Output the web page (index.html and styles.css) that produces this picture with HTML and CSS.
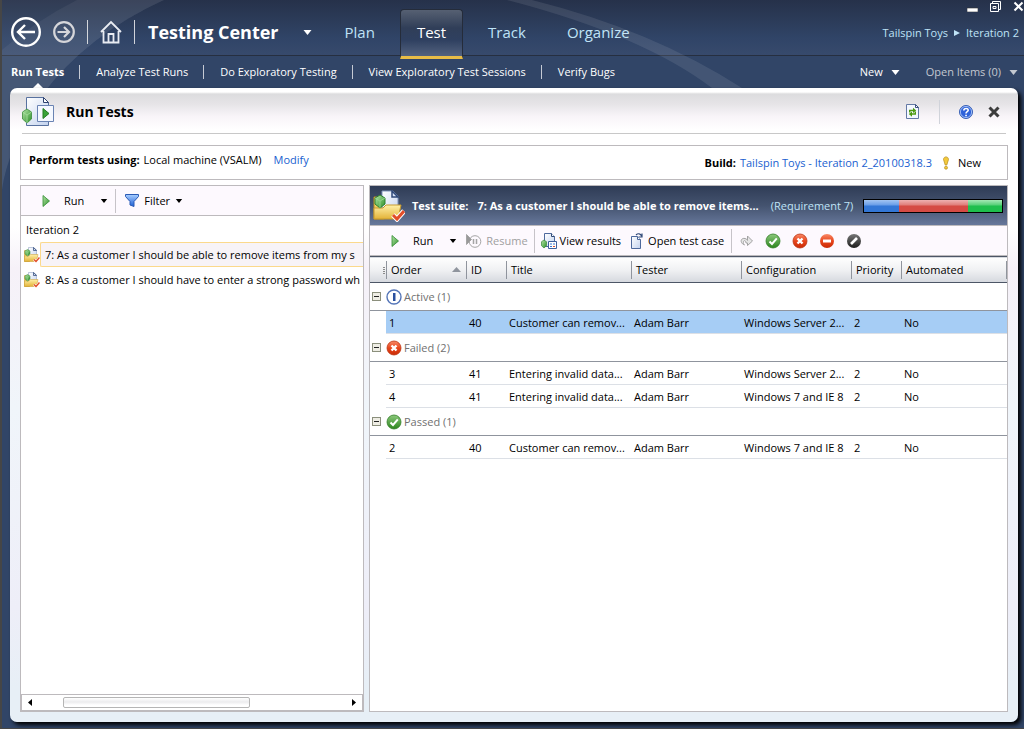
FILE: index.html
```
<!DOCTYPE html>
<html lang="en">

<head>
  <meta charset="UTF-8">
  <meta name="viewport" content="width=device-width, initial-scale=1.0">
  <title>Testing Center</title>
  <link rel="stylesheet" href="styles.css">
</head>

<body>
  <!-- shared icons -->
  <svg class="defs" width="0" height="0" aria-hidden="true">
    <defs>
      <linearGradient id="g-green" x1="0" y1="0" x2="1" y2="1">
        <stop offset="0" stop-color="#b5e6a8" />
        <stop offset="1" stop-color="#2c8f28" />
      </linearGradient>
      <linearGradient id="g-ok" x1="0" y1="0" x2="0" y2="1">
        <stop offset="0" stop-color="#8cc97c" />
        <stop offset="1" stop-color="#2c851d" />
      </linearGradient>
      <linearGradient id="g-red" x1="0" y1="0" x2="0" y2="1">
        <stop offset="0" stop-color="#f88a68" />
        <stop offset="0.5" stop-color="#e8461c" />
        <stop offset="1" stop-color="#c92a05" />
      </linearGradient>
      <linearGradient id="g-black" x1="0" y1="0" x2="0" y2="1">
        <stop offset="0" stop-color="#777" />
        <stop offset="1" stop-color="#1d1d1d" />
      </linearGradient>
      <linearGradient id="g-page" x1="0" y1="0" x2="1" y2="1">
        <stop offset="0" stop-color="#fff" />
        <stop offset="1" stop-color="#c3d2ee" />
      </linearGradient>
      <linearGradient id="g-folder" x1="0" y1="0" x2="0" y2="1">
        <stop offset="0" stop-color="#fff0a8" />
        <stop offset="1" stop-color="#e3b338" />
      </linearGradient>
      <linearGradient id="g-blue" x1="0" y1="0" x2="0" y2="1">
        <stop offset="0" stop-color="#a9ceff" />
        <stop offset="1" stop-color="#1d5fd6" />
      </linearGradient>
      <symbol id="i-caret" viewBox="0 0 8 5"><path d="M0 0h8L4 5z" fill="currentColor" /></symbol>
      <symbol id="i-play" viewBox="0 0 8 12"><path d="M1 .5 7.500 6 1 11.500z" fill="url(#g-green)" stroke="#2f8a2f" stroke-width=".8" /></symbol>
      <symbol id="i-pass" viewBox="0 0 16 16">
        <circle cx="8" cy="8" r="7" fill="url(#g-ok)" stroke="#347f28" stroke-width=".8" />
        <path d="M4.500 8.500 7 11l4.800-5.600" fill="none" stroke="#fff" stroke-width="2" />
      </symbol>
      <symbol id="i-fail" viewBox="0 0 16 16">
        <circle cx="8" cy="8" r="7" fill="url(#g-red)" stroke="#bd3512" stroke-width=".8" />
        <path d="m5.500 5.500 5 5m0-5-5 5" stroke="#fff" stroke-width="2.400" />
      </symbol>
      <symbol id="i-suite" viewBox="0 0 32 32">
        <path d="M1 7h8l2 4v18H1z" fill="#f0cb62" stroke="#b98e25" />
        <path d="M9 1h11l5 5v19H9z" fill="url(#g-page)" stroke="#7e93ba" />
        <path d="M19 1v6h6z" fill="#d5e0f4" stroke="#2f4877" stroke-width="1.500" />
        <path d="M1 29V18h9l3-3h15l-3 14z" fill="url(#g-folder)" stroke="#c89a2e" />
        <path d="m7 5 5 3v6l-5 4-5-4V8z" fill="url(#g-green)" stroke="#2d812d" />
        <path d="m2 8 5 3 5-3M7 11v7" fill="none" stroke="#9ad892" stroke-width=".8" />
        <path d="m20 25 4 4 7-8" fill="none" stroke="#fff" stroke-width="5" />
        <path d="m20 25 4 4 7-8" fill="none" stroke="#e24d28" stroke-width="3" />
      </symbol>
    </defs>
  </svg>

  <!-- light rays behind the menus -->
  <svg class="rays" height="190" aria-hidden="true">
    <path d="M0 0h162Q85 35 40 95 5 150 0 190z" fill="#fff" fill-opacity=".05" />
    <path d="M0 50Q35 20 75 0H162Q85 35 40 95 5 150 0 190z" fill="#fff" fill-opacity=".05" />
    <path d="M505 0Q640 35 710 88h30Q650 30 530 0z" fill="#fff" fill-opacity=".09" />
  </svg>

  <header class="topbar">
    <button class="icon-btn back" aria-label="Back">
      <svg width="32" height="32" viewBox="0 0 32 32" fill="none" stroke="#fff" stroke-width="2.400">
        <circle cx="16" cy="16" r="13.800" />
        <path d="M25 16H8m7-7-7 7 7 7" />
      </svg>
    </button>
    <button class="icon-btn forward" aria-label="Forward">
      <svg width="24" height="24" viewBox="0 0 24 24" fill="none" stroke="#d2d2d6" stroke-width="2.200">
        <circle cx="12" cy="12" r="9.800" />
        <path d="M5.500 12H17m-5-5 5 5-5 5" />
      </svg>
    </button>
    <span class="bar"></span>
    <button class="icon-btn home" aria-label="Home">
      <svg width="22" height="24" viewBox="0 0 22 24" fill="none" stroke="#e8ebf2" stroke-width="1.800">
        <path d="M1 12 11 2l10 10M3.500 11v11.500h15V11" />
        <path d="M8.500 22v-8h5v8" />
      </svg>
    </button>
    <span class="bar"></span>
    <button class="center-menu">Testing Center <svg width="9" height="5"><use href="#i-caret" /></svg></button>
    <nav class="tabs">
      <a href="#">Plan</a>
      <a href="#" class="active">Test</a>
      <a href="#">Track</a>
      <a href="#">Organize</a>
    </nav>
    <div class="top-right">
      <div class="window-btns">
        <button class="icon-btn" aria-label="Minimize"><svg width="11" height="11"><path d="M0 7h11v4H0z" fill="#fff" stroke="#333" stroke-width=".6" /></svg></button>
        <button class="icon-btn" aria-label="Restore"><svg width="11" height="11" fill="none" stroke="#fff"><path d="M2.500 2V.5h8v8H9" /><path d="M.5 2.500h8v8h-8z" /><path d="M3 5.500h3v2H3z" /></svg></button>
        <button class="icon-btn" aria-label="Close"><svg width="11" height="11"><path d="m1.500 1.500 8 8m0-8-8 8" stroke="#fff" stroke-width="2" /></svg></button>
      </div>
      <div class="crumbs">
        <a href="#">Tailspin Toys</a>
        <svg width="6" height="6"><path d="M0 0v6l6-3z" fill="#bfe3f7" /></svg>
        <a href="#">Iteration 2</a>
      </div>
    </div>
  </header>

  <div class="subbar">
    <nav class="subnav">
      <a href="#" class="active">Run Tests</a>
      <a href="#">Analyze Test Runs</a>
      <a href="#">Do Exploratory Testing</a>
      <a href="#">View Exploratory Test Sessions</a>
      <a href="#">Verify Bugs</a>
    </nav>
    <button class="menu-btn">New <svg width="9" height="5"><use href="#i-caret" /></svg></button>
    <button class="menu-btn dim">Open Items (0) <svg width="9" height="5"><use href="#i-caret" /></svg></button>
  </div>

  <main class="panel">
    <div class="panel-head">
      <svg width="32" height="30" viewBox="0 0 32 30">
        <path d="M4.500.5h17l5 5v23h-22z" fill="url(#g-page)" stroke="#58719f" />
        <path d="M21.500.5v5h5z" fill="#fff" stroke="#2d4270" />
        <path d="m5 12 4.500 3v7L5 26l-4.500-4v-7z" fill="url(#g-green)" stroke="#3a8a3a" stroke-width=".8" />
        <path d="m.5 15 4.500 3 4.500-3M5 18v8" fill="none" stroke="#a9dfa0" stroke-width=".8" />
        <path d="M15.500 8.500h16v16h-16z" fill="#f5f8ff" stroke="#6a83b3" />
        <path d="m21 11.500 6 5-6 5z" fill="#39a339" stroke="#237a23" />
      </svg>
      <h1>Run Tests</h1>
      <div class="head-tools">
        <button class="icon-btn" aria-label="Refresh">
          <svg width="14" height="15" viewBox="0 0 14 15">
            <path d="M.5.500h9l3 3v11H.5z" fill="#f4f8ff" stroke="#6479a5" />
            <path d="M9.500.5v3h3z" fill="#fff" stroke="#3c5280" />
            <path d="M3.700 8.500V6.500h4M9.300 7.500v2.500h-4" fill="none" stroke="#4d9a10" stroke-width="1.400" />
            <path d="m7 3.800 3.200 2.700L7 9zM6 7.500 2.800 10 6 12.700z" fill="#4d9a10" />
          </svg>
        </button>
        <span class="bar"></span>
        <button class="icon-btn" aria-label="Help">
          <svg width="14" height="14" viewBox="0 0 14 14">
            <circle cx="7" cy="7" r="6.500" fill="#2e62d9" stroke="#3a60b4" />
            <circle cx="7" cy="7" r="5.600" fill="none" stroke="#b9d0fb" stroke-width=".8" />
            <path d="M4.800 5.500C5 2.800 9.300 2.900 9.200 5.300 9.100 6.700 7 6.600 7 8.500" fill="none" stroke="#fff" stroke-width="1.600" />
            <path d="M6.200 9.700h1.700v1.600H6.200z" fill="#fff" />
          </svg>
        </button>
        <button class="icon-btn" aria-label="Close page">
          <svg width="12" height="12"><path d="m1.500 1.500 9 9m0-9-9 9" stroke="#3c3c3c" stroke-width="3" /></svg>
        </button>
      </div>
    </div>

    <div class="info">
      <p class="machine"><b>Perform tests using:</b><span>Local machine (VSALM)</span><a href="#">Modify</a></p>
      <p class="build"><b>Build:</b><a href="#">Tailspin Toys - Iteration 2_20100318.3</a>
        <svg width="8" height="14" viewBox="0 0 8 14"><path d="M1.500 3.500C1.500 0 6.500 0 6.500 3.500L4.800 9H3.200z" fill="#f3c93a" stroke="#b48b1b" stroke-width=".7" /><circle cx="4" cy="11.700" r="1.500" fill="#f3c93a" stroke="#b48b1b" stroke-width=".7" /></svg>
        <span>New</span></p>
    </div>

    <div class="split">
      <section class="suites">
        <div class="toolbar">
          <button class="tool run"><svg width="8" height="12"><use href="#i-play" /></svg>Run</button>
          <button class="icon-btn arrow" aria-label="Run options"><svg width="8" height="4"><use href="#i-caret" /></svg></button>
          <span class="bar"></span>
          <button class="tool filter">
            <svg width="14" height="13" viewBox="0 0 14 13"><path d="M.5.5h13v2L9 7.500v5l-4-1.500V7.500L.5 2.500z" fill="url(#g-blue)" stroke="#2a5ab5" /></svg>Filter
            <svg width="8" height="4"><use href="#i-caret" /></svg></button>
        </div>
        <ul class="tree">
          <li class="root">Iteration 2</li>
          <li><svg width="16" height="16"><use href="#i-suite" /></svg><span class="selected">7: As a customer I should be able to remove items from my s</span></li>
          <li><svg width="16" height="16"><use href="#i-suite" /></svg><span>8: As a customer I should have to enter a strong password wh</span></li>
        </ul>
        <div class="scrollbar">
          <button class="icon-btn" aria-label="Scroll left"><svg width="4" height="7"><path d="M4 0v7L0 3.500z" /></svg></button>
          <div class="track"><div class="thumb"></div></div>
          <button class="icon-btn" aria-label="Scroll right"><svg width="4" height="7"><path d="M0 0v7l4-3.500z" /></svg></button>
        </div>
      </section>

      <section class="tests">
        <div class="suite-head">
          <svg width="32" height="32"><use href="#i-suite" /></svg>
          <h2>Test suite:</h2>
          <h2 class="name">7: As a customer I should be able to remove items...</h2>
          <span class="req">(Requirement 7)</span>
          <div class="progress"><i class="blue"></i><i class="red"></i><i class="green"></i></div>
        </div>
        <div class="toolbar">
          <button class="tool run"><svg width="8" height="12"><use href="#i-play" /></svg>Run</button>
          <button class="icon-btn arrow" aria-label="Run options"><svg width="8" height="4"><use href="#i-caret" /></svg></button>
          <button class="tool resume" disabled>
            <svg width="16" height="14" viewBox="0 0 16 14" fill="none" stroke="#a5a5a5"><circle cx="9" cy="7.500" r="5.800" /><path d="M7.500 5v5M10.500 5v5" stroke-width="1.500" /><path d="M.5.500v10l5-5z" fill="#999" /></svg>Resume</button>
          <span class="bar"></span>
          <button class="tool view">
            <svg width="16" height="16" viewBox="0 0 16 16"><path d="M3.500.500h7l3 3v10h-10z" fill="url(#g-page)" stroke="#4d689c" /><path d="M10.500.5v3h3" fill="#fff" stroke="#2f4877" /><path d="m3 7 2.500 1.700v4L3 15 .5 12.700v-4z" fill="url(#g-green)" stroke="#3a8a3a" stroke-width=".7" /><path d="M7.500 8.500h8v7h-8z" fill="#fff" stroke="#3f5f9d" /><path d="M9 11h2m1 0h2m-5 2.500h2" stroke="#3b74d4" /><path d="M12 13.500h2" stroke="#d84c35" /></svg>View results</button>
          <button class="tool open">
            <svg width="13" height="16" viewBox="0 0 13 16"><path d="M.5 3.500h6l3 3v9h-9z" fill="url(#g-page)" stroke="#4d689c" /><path d="M6.500 3.500v3h3" fill="#fff" stroke="#4d689c" /><path d="M5 2C7 0 9.500.5 10.500 3M7.500 4h3.500V.5" fill="none" stroke="#2f4877" stroke-width="1.200" /></svg>Open test case</button>
          <span class="bar"></span>
          <div class="marks">
            <button class="icon-btn" aria-label="Reset" disabled><svg width="14" height="14" viewBox="0 0 14 14"><path d="M4.500 11C-.5 9 .5 3.500 5 4.500c2 .5 2.500 2 2.500 2V2l5 5-5 4.500V9H6C6 6.500 4 6 3.500 7.500c-.3 1.500 0 2.500 1 3.500z" fill="#e6e6e6" stroke="#a3a3a3" /></svg></button>
            <button class="icon-btn" aria-label="Pass test"><svg width="16" height="16"><use href="#i-pass" /></svg></button>
            <button class="icon-btn" aria-label="Fail test"><svg width="16" height="16"><use href="#i-fail" /></svg></button>
            <button class="icon-btn" aria-label="Block test"><svg width="16" height="16"><circle cx="8" cy="8" r="7" fill="url(#g-red)" /><path d="M4 6.500h8v3H4z" fill="#fff" /></svg></button>
            <button class="icon-btn" aria-label="Not applicable"><svg width="16" height="16"><circle cx="8" cy="8" r="7" fill="url(#g-black)" /><path d="m5 11 6-6" stroke="#fff" stroke-width="2.600" /></svg></button>
          </div>
        </div>

        <table>
          <colgroup>
            <col class="c-toggle"><col class="c-order"><col class="c-id"><col class="c-title"><col class="c-tester"><col class="c-config"><col class="c-priority"><col>
          </colgroup>
          <thead>
            <tr>
              <th class="grip"></th>
              <th><span class="sorted">Order <svg width="9" height="5"><path d="M0 5h9L4.500 0z" fill="#8f949d" /></svg></span></th>
              <th>ID</th>
              <th>Title</th>
              <th>Tester</th>
              <th>Configuration</th>
              <th>Priority</th>
              <th class="last">Automated</th>
            </tr>
          </thead>
          <tbody>
            <tr class="group">
              <td colspan="8"><div><button class="toggle" aria-label="Collapse Active"></button><svg width="16" height="16"><circle cx="8" cy="8" r="7" fill="#fff" stroke="#5475b8" stroke-width="1.400" /><path d="M7 4h2.500v8H7z" fill="#2b519f" /></svg>Active (1)</div></td>
            </tr>
            <tr class="item selected">
              <td></td><td>1</td><td>40</td><td>Customer can remov...</td><td>Adam Barr</td><td>Windows Server 2...</td><td>2</td><td>No</td>
            </tr>
            <tr class="group">
              <td colspan="8"><div><button class="toggle" aria-label="Collapse Failed"></button><svg width="16" height="16"><use href="#i-fail" /></svg>Failed (2)</div></td>
            </tr>
            <tr class="item">
              <td></td><td>3</td><td>41</td><td>Entering invalid data...</td><td>Adam Barr</td><td>Windows Server 2...</td><td>2</td><td>No</td>
            </tr>
            <tr class="item">
              <td></td><td>4</td><td>41</td><td>Entering invalid data...</td><td>Adam Barr</td><td>Windows 7 and IE 8</td><td>2</td><td>No</td>
            </tr>
            <tr class="group">
              <td colspan="8"><div><button class="toggle" aria-label="Collapse Passed"></button><svg width="16" height="16"><use href="#i-pass" /></svg>Passed (1)</div></td>
            </tr>
            <tr class="item">
              <td></td><td>2</td><td>40</td><td>Customer can remov...</td><td>Adam Barr</td><td>Windows 7 and IE 8</td><td>2</td><td>No</td>
            </tr>
          </tbody>
        </table>
      </section>
    </div>
  </main>
</body>

</html>
```
FILE: styles.css
```
* {
  box-sizing: border-box;
  padding: 0;
  margin: 0;
}

body {
  position: relative;
  display: flex;
  flex-direction: column;
  min-height: 100vh;
  padding-bottom: 6px;
  border-left: 2px solid #464646;
  border-bottom: 1px solid #464646;
  background: #314567;
  font-family: "Segoe UI", "Open Sans", sans-serif;
  font-size: 11px;
  line-height: 16px;
  color: #000;
}

.defs {
  position: absolute;
}

.rays {
  position: absolute;
  left: 0;
  top: 0;
  width: 100%;
  pointer-events: none;
}

svg {
  flex: none;
}

a {
  color: #1a5fd0;
  text-decoration: none;
}

button {
  border: 0;
  background: none;
  font: inherit;
  color: inherit;
  white-space: nowrap;
}

.icon-btn {
  display: flex;
  align-items: center;
  justify-content: center;
}

.bar {
  width: 1px;
  height: 24px;
  background: #d0d3da;
}

/* top bar */
.topbar {
  display: flex;
  align-items: center;
  height: 56px;
  padding: 9px 0 0 8px;
  border-bottom: 1px solid #262f40;
  background: linear-gradient(#26314a 0, #2b3a57 18px, #304467 38px, #374a6c 100%);
}

.back {
  margin-right: 10px;
}

.forward {
  margin-right: 11px;
}

.home {
  margin: 0 12px;
}

.center-menu {
  display: flex;
  align-items: center;
  gap: 24px;
  margin-left: 13px;
  font-size: 18px;
  font-weight: bold;
  line-height: 24px;
  color: #fff;
}

.tabs {
  display: flex;
  align-self: stretch;
  gap: 9px;
  margin: 0 auto 0 17px;
}

.tabs a {
  padding: 0 16px;
  font-size: 15px;
  line-height: 47px;
  color: #bfe3f7;
}

.tabs .active {
  height: 50px;
  border: 1px solid #252c3a;
  border-bottom: 3px solid #e9bd46;
  border-radius: 4px 4px 0 0;
  background: linear-gradient(#566072, #303e58 18px, #2f4060 30px, #53627e);
  line-height: 45px;
  color: #fff;
}

.top-right {
  display: flex;
  flex-direction: column;
  align-self: flex-start;
  align-items: flex-end;
  gap: 13px;
  margin-top: -8px;
}

.window-btns {
  display: flex;
  gap: 12px;
}

.crumbs {
  display: flex;
  align-items: center;
  gap: 6px;
  padding-right: 5px;
}

.crumbs a {
  color: #bfe3f7;
}

/* second level menu */
.subbar {
  display: flex;
  align-items: center;
  height: 32px;
  padding: 0 6px 0 9px;
  color: #fff;
}

.subnav {
  display: flex;
  align-self: stretch;
  align-items: center;
  margin-right: auto;
}

.subnav a {
  position: relative;
  color: #fff;
  white-space: nowrap;
}

.subnav a + a {
  margin-left: 15px;
  padding-left: 16px;
  border-left: 1px solid #c5cad4;
  line-height: 14px;
}

.subnav .active {
  font-weight: bold;
}

/* pointer to the open page */
.subnav .active::after {
  content: "";
  position: absolute;
  left: 22px;
  top: 19px;
  border: 5px solid transparent;
  border-top: 0;
  border-bottom-color: #fff;
}

.menu-btn {
  display: flex;
  align-items: center;
  gap: 8px;
  margin-left: 26px;
}

.dim {
  color: #c3c8d0;
}

/* page */
.panel {
  position: relative;
  flex: 1;
  display: flex;
  flex-direction: column;
  margin: 0 6px 0 8px;
  padding: 0 10px 10px;
  border-radius: 7px;
  background: linear-gradient(#fff 0, #fff 4px, #dcdcde 6px, #e6e4e7 16px, #f8f4f8 28px, #fff 42px, #fff 140px, #f6f1f8 180px, #f0f5fa 320px, #eeeef8 520px, #e7eff6 600px);
  box-shadow: 3px 3px 4px #000;
}

.panel-head {
  display: flex;
  align-items: center;
  height: 46px;
  margin: 0 2px;
  padding-top: 2px;
  border-bottom: 1px solid #c8c8c8;
}

h1 {
  margin-left: 12px;
  font-size: 14px;
  line-height: 20px;
}

.head-tools {
  display: flex;
  align-items: center;
  gap: 15px;
  margin-left: auto;
  padding-right: 6px;
}

.head-tools .bar {
  margin: 0 4px;
}

.info {
  display: flex;
  align-items: center;
  justify-content: space-between;
  height: 35px;
  margin-top: 11px;
  padding: 0 26px 0 8px;
  border: 1px solid #bdbabd;
  background: #fff;
}

.machine {
  display: flex;
  gap: 4px;
  padding-bottom: 6px;
}

.machine a {
  margin-left: 8px;
}

.build {
  display: flex;
  align-items: center;
  gap: 4px;
}

.build svg {
  margin: 0 4px 0 6px;
}

.split {
  flex: 1;
  display: grid;
  grid-template-columns: 344px 1fr;
  gap: 5px;
  margin-top: 5px;
}

.suites,
.tests {
  display: flex;
  flex-direction: column;
  min-width: 0;
  border: 1px solid #bdbabd;
  background: #fff;
}

.toolbar {
  display: flex;
  align-items: center;
  height: 30px;
  border-bottom: 1px solid #bdbabd;
  background: #fdf9fe;
}

.toolbar .bar {
  background: #c6c3c8;
}

.tool {
  display: flex;
  align-items: center;
  gap: 4px;
}

.run {
  gap: 14px;
  margin-left: 21px;
}

.arrow {
  margin: 0 7px 0 16px;
}

.filter {
  gap: 5px;
  margin-left: 9px;
}

.tree {
  flex: 1;
  list-style: none;
  padding-top: 1px;
}

.tree li {
  display: flex;
  align-items: center;
  height: 25px;
  padding-left: 3px;
}

.tree .root {
  padding-left: 5px;
}

.tree span {
  flex: 1;
  min-width: 0;
  padding-left: 4px;
  border: 1px solid transparent;
  border-right: 0;
  line-height: 23px;
  white-space: nowrap;
  overflow: hidden;
}

.tree .selected {
  border-color: #fbd98c;
  border-radius: 2px 0 0 2px;
  background: #f7f3f7;
}

.scrollbar {
  display: flex;
  align-items: center;
  height: 17px;
  padding: 0 6px;
  border: 1px solid #bdbabd;
}

.track {
  flex: 1;
  padding: 0 25px 0 31px;
}

.thumb {
  width: 71%;
  height: 11px;
  border: 1px solid #b5b5b5;
  border-radius: 2px;
  background: linear-gradient(#fff, #ececee 4px, #fff 7px);
}

/* test list */
.suite-head {
  display: flex;
  align-items: center;
  height: 40px;
  padding: 0 4px 0 3px;
  border-bottom: 1px solid #bdbabd;
  background: linear-gradient(#2f3c56, #44536f 50%, #66779a);
  color: #fff;
  white-space: nowrap;
}

h2 {
  margin-left: 7px;
  font-size: 11px;
  line-height: 16px;
}

.suite-head .name {
  margin-left: 9px;
}

.req {
  margin-left: 12px;
  color: #bfe3f7;
}

.progress {
  display: flex;
  width: 140px;
  height: 14px;
  margin-left: auto;
  border: 1px solid #000;
}

.progress i {
  flex: 2;
}

.progress .blue {
  flex: 1;
  background: linear-gradient(#a3c5f2, #6a9ee8 5px, #3377d6 6px);
}

.progress .red {
  background: linear-gradient(#eeb1b1, #e07e7a 5px, #d54b44 6px);
}

.progress .green {
  flex: 1;
  background: linear-gradient(#a5e8b5, #57d078 5px, #1fbf4d 6px);
}

.resume {
  margin-right: 6px;
  color: #a0a0a0;
}

.tests .arrow {
  margin-right: 9px;
}

.view {
  gap: 3px;
  margin-left: 6px;
}

.open {
  margin: 0 7px 0 10px;
}

.marks {
  display: flex;
  gap: 11px;
  margin-left: 8px;
}

table {
  width: 100%;
  table-layout: fixed;
  border-collapse: collapse;
}

.c-toggle {
  width: 16px;
}

.c-order {
  width: 80px;
}

.c-id {
  width: 40px;
}

.c-title {
  width: 125px;
}

.c-tester,
.c-config {
  width: 110px;
}

.c-priority {
  width: 50px;
}

thead {
  border-top: 1px solid #4d5666;
  border-bottom: 1px solid #4d5666;
  background: linear-gradient(#fefefe, #f0f1f3 50%, #d6d9df);
}

th {
  height: 26px;
  padding-left: 5px;
  background: linear-gradient(#8f949d, #8f949d) 0 4px / 1px 18px no-repeat;
  font-weight: normal;
  text-align: left;
}

.grip {
  background: repeating-linear-gradient(#8a8a8a 0 1px, transparent 1px 2px) 13px 10px / 2px 7px no-repeat;
}

th.last {
  background:
    linear-gradient(#8f949d, #8f949d) 0 4px / 1px 18px no-repeat,
    linear-gradient(#8f949d, #8f949d) 100% 4px / 1px 18px no-repeat;
}

.sorted {
  display: flex;
  align-items: center;
  justify-content: space-between;
  padding-right: 5px;
}

.group td {
  height: 28px;
  border-bottom: 1px solid #8f949d;
  color: #707070;
}

.group div {
  display: flex;
  align-items: center;
  padding-left: 2px;
}

.group svg {
  margin: 0 2px 0 5px;
}

.toggle {
  width: 9px;
  height: 9px;
  border: 1px solid #8b8f7c;
  background: linear-gradient(#222, #222) center / 5px 1px no-repeat, #eeede4;
}

.item td {
  height: 23px;
  padding: 2px 0 0 3px;
  border-bottom: 1px solid #dce0e6;
  white-space: nowrap;
}

.item td:first-child {
  border-bottom: 0;
}

.item.selected td + td {
  background: #a6cdf5;
}
```
